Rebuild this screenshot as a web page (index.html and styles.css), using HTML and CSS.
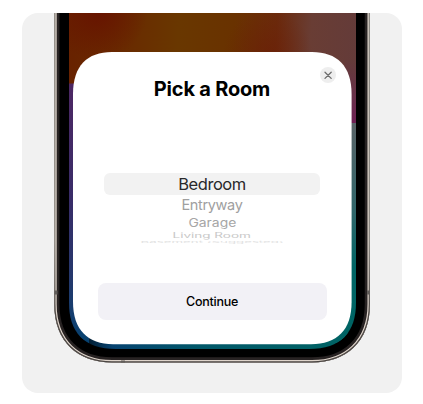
FILE: index.html
```
<!DOCTYPE html>
<html lang="en">
<head>
<meta charset="utf-8">
<title>Pick a Room</title>
<link rel="stylesheet" href="styles.css">
</head>
<body>
<main class="stage">
  <svg class="phone" viewBox="22 13 380 380" aria-hidden="true">
    <defs>
      <linearGradient id="top" x1="69" y1="30" x2="356" y2="50" gradientUnits="userSpaceOnUse">
        <stop offset="0" stop-color="#682200"/><stop offset=".22" stop-color="#692c00"/>
        <stop offset=".38" stop-color="#693700"/><stop offset=".57" stop-color="#693200"/>
        <stop offset=".72" stop-color="#6b2a0c"/><stop offset=".84" stop-color="#693d34"/>
        <stop offset="1" stop-color="#643b39"/>
      </linearGradient>
      <radialGradient id="red" cx="98" cy="10" r="50" gradientUnits="userSpaceOnUse">
        <stop offset="0" stop-color="#671300"/><stop offset="1" stop-color="#671300" stop-opacity="0"/>
      </radialGradient>
      <radialGradient id="ember" cx="268" cy="55" r="45" gradientUnits="userSpaceOnUse">
        <stop offset="0" stop-color="#6a1c06" stop-opacity=".55"/><stop offset="1" stop-color="#6a1c06" stop-opacity="0"/>
      </radialGradient>
      <linearGradient id="left" x1="0" x2="0" y1="83" y2="345" gradientUnits="userSpaceOnUse">
        <stop offset="0" stop-color="#4d2763"/><stop offset=".45" stop-color="#382c68"/>
        <stop offset=".75" stop-color="#24386c"/><stop offset="1" stop-color="#064270"/>
      </linearGradient>
      <linearGradient id="bottom" x1="69" x2="356" y1="0" y2="0" gradientUnits="userSpaceOnUse">
        <stop offset="0" stop-color="#064270" stop-opacity="0"/><stop offset=".15" stop-color="#064270"/>
        <stop offset=".45" stop-color="#005769"/><stop offset="1" stop-color="#006464"/>
      </linearGradient>
      <linearGradient id="rightTop" x1="0" x2="0" y1="60" y2="123" gradientUnits="userSpaceOnUse">
        <stop offset="0" stop-color="#643b39"/><stop offset=".6" stop-color="#68304a"/><stop offset="1" stop-color="#6e2054"/>
      </linearGradient>
      <linearGradient id="right" x1="0" x2="0" y1="123" y2="345" gradientUnits="userSpaceOnUse">
        <stop offset="0" stop-color="#596367"/><stop offset=".4" stop-color="#30666a"/><stop offset=".65" stop-color="#006565"/><stop offset="1" stop-color="#006464"/>
      </linearGradient>
      <linearGradient id="rim" x1="0" x2="0" y1="240" y2="320" gradientUnits="userSpaceOnUse">
        <stop offset="0" stop-color="#8d8983"/><stop offset="1" stop-color="#4b4643"/>
      </linearGradient>
      <path id="case" d="M54.2 5H370V304C370 342 346 362.5 312 362.5H112C78 362.5 54.2 342 54.2 304Z"/>
      <clipPath id="body"><use href="#case"/></clipPath>
      <clipPath id="screen"><path d="M69 13H356V303C356 332 341 349 309 349H116C84 349 69 332 69 303Z"/></clipPath>
    </defs>
    <g clip-path="url(#body)">
      <use href="#case" fill="#000"/>
      <use href="#case" fill="none" stroke="#272222" stroke-width="10.5"/>
      <use href="#case" fill="none" stroke="#ded4cb" stroke-width="5"/>
      <use href="#case" fill="none" stroke="url(#rim)" stroke-width="2.6"/>
    </g>
    <path d="M54.5 290.5h3v4h-3zM367 290.5h2.5v4H367zM121 360.5h4v2h-4z" fill="#625e5b"/>
    <g clip-path="url(#screen)">
      <path d="M69 13h287v90H69z" fill="url(#top)"/>
      <path d="M69 13h287v47H69z" fill="url(#red)"/>
      <path d="M200 13h130v47H200z" fill="url(#ember)"/>
      <path d="M69 83.5h20V349H69z" fill="url(#left)"/>
      <path d="M345 60h11v63h-11z" fill="url(#rightTop)"/>
      <path d="M336 123h20v226h-20z" fill="url(#right)"/>
      <path d="M69 332h287v17H69z" fill="url(#bottom)"/>
    </g>
    <path d="M112 52H312C337 52 351.6 66 351.6 94V302C351.6 330 337 344.2 311 344.2H113C88 344.2 73 330 73 302V94C73 66 87 52 112 52Z" fill="#fff"/>
  </svg>
  <section class="sheet">
    <button class="close" aria-label="Close"><svg viewBox="0 0 16 16"><path d="M5 5.2l6.2 6.2M11.2 5.2l-6.2 6.2"/></svg></button>
    <h1 class="title">Pick a Room</h1>
    <div class="picker">
      <div class="row selected"><span>Bedroom</span></div>
      <div class="row second"><span>Entryway</span></div>
      <div class="row third"><span>Garage</span></div>
      <div class="row fourth"><span>Living Room</span></div>
      <div class="row fifth"><span>Basement (Suggested)</span></div>
    </div>
    <button class="continue">Continue</button>
  </section>
</main>
</body>
</html>
```
FILE: styles.css
```
* { box-sizing: border-box; }
body { margin: 0; background: #fff; font-family: Inter, sans-serif; }
.stage { display: grid; width: 380px; height: 380px; margin: 13px 0 0 22px; border-radius: 16px; background: #f1f1f1; overflow: hidden; }
.phone, .sheet { grid-area: 1 / 1; }
.phone { display: block; width: 380px; height: 380px; }
.sheet { position: relative; width: 278px; height: 292px; margin: 39px 0 0 51px; display: flex; flex-direction: column; align-items: center; }
button { border: 0; padding: 0; font-family: inherit; }
.close { position: absolute; top: 15px; right: 15px; width: 16px; height: 16px; border-radius: 50%; background: #eee; }
.close svg { display: block; width: 16px; height: 16px; fill: none; stroke: #6c6c6c; stroke-width: 1.3; stroke-linecap: round; }
.title { margin: 24px 0 0; height: 27px; line-height: 27px; font-size: 20px; font-weight: 700; letter-spacing: -.2px; color: #000; white-space: nowrap; }
.picker { display: flex; flex-direction: column; align-items: center; width: 216px; height: 76px; margin-top: 70px; }
.row { display: flex; align-items: center; justify-content: center; flex: none; width: 100%; white-space: nowrap; }
.row span { display: block; }
.selected { height: 22px; border-radius: 6px; background: #f2f2f2; font-size: 16.5px; letter-spacing: -.45px; color: #29292b; }
.second { height: 19px; font-size: 14.5px; letter-spacing: -.35px; color: #a0a0a0; }
.third { height: 16px; font-size: 13px; color: #a6a6a6; }
.third span { transform: translateY(.8px) scale(1.07, .86); }
.fourth { height: 9px; font-size: 13px; color: #c8c8c8; }
.fourth span { transform: scale(1.04, .53); }
.fifth { height: 2px; margin-top: 1.5px; font-size: 13px; color: #e2e2e2; }
.fifth span { transform: scale(1.02, .15); }
.continue { width: 229px; height: 37px; margin-top: 34px; border-radius: 8px; background: #f2f1f6; color: #000; font-size: 12.5px; font-weight: 500; letter-spacing: -.25px; }
```
